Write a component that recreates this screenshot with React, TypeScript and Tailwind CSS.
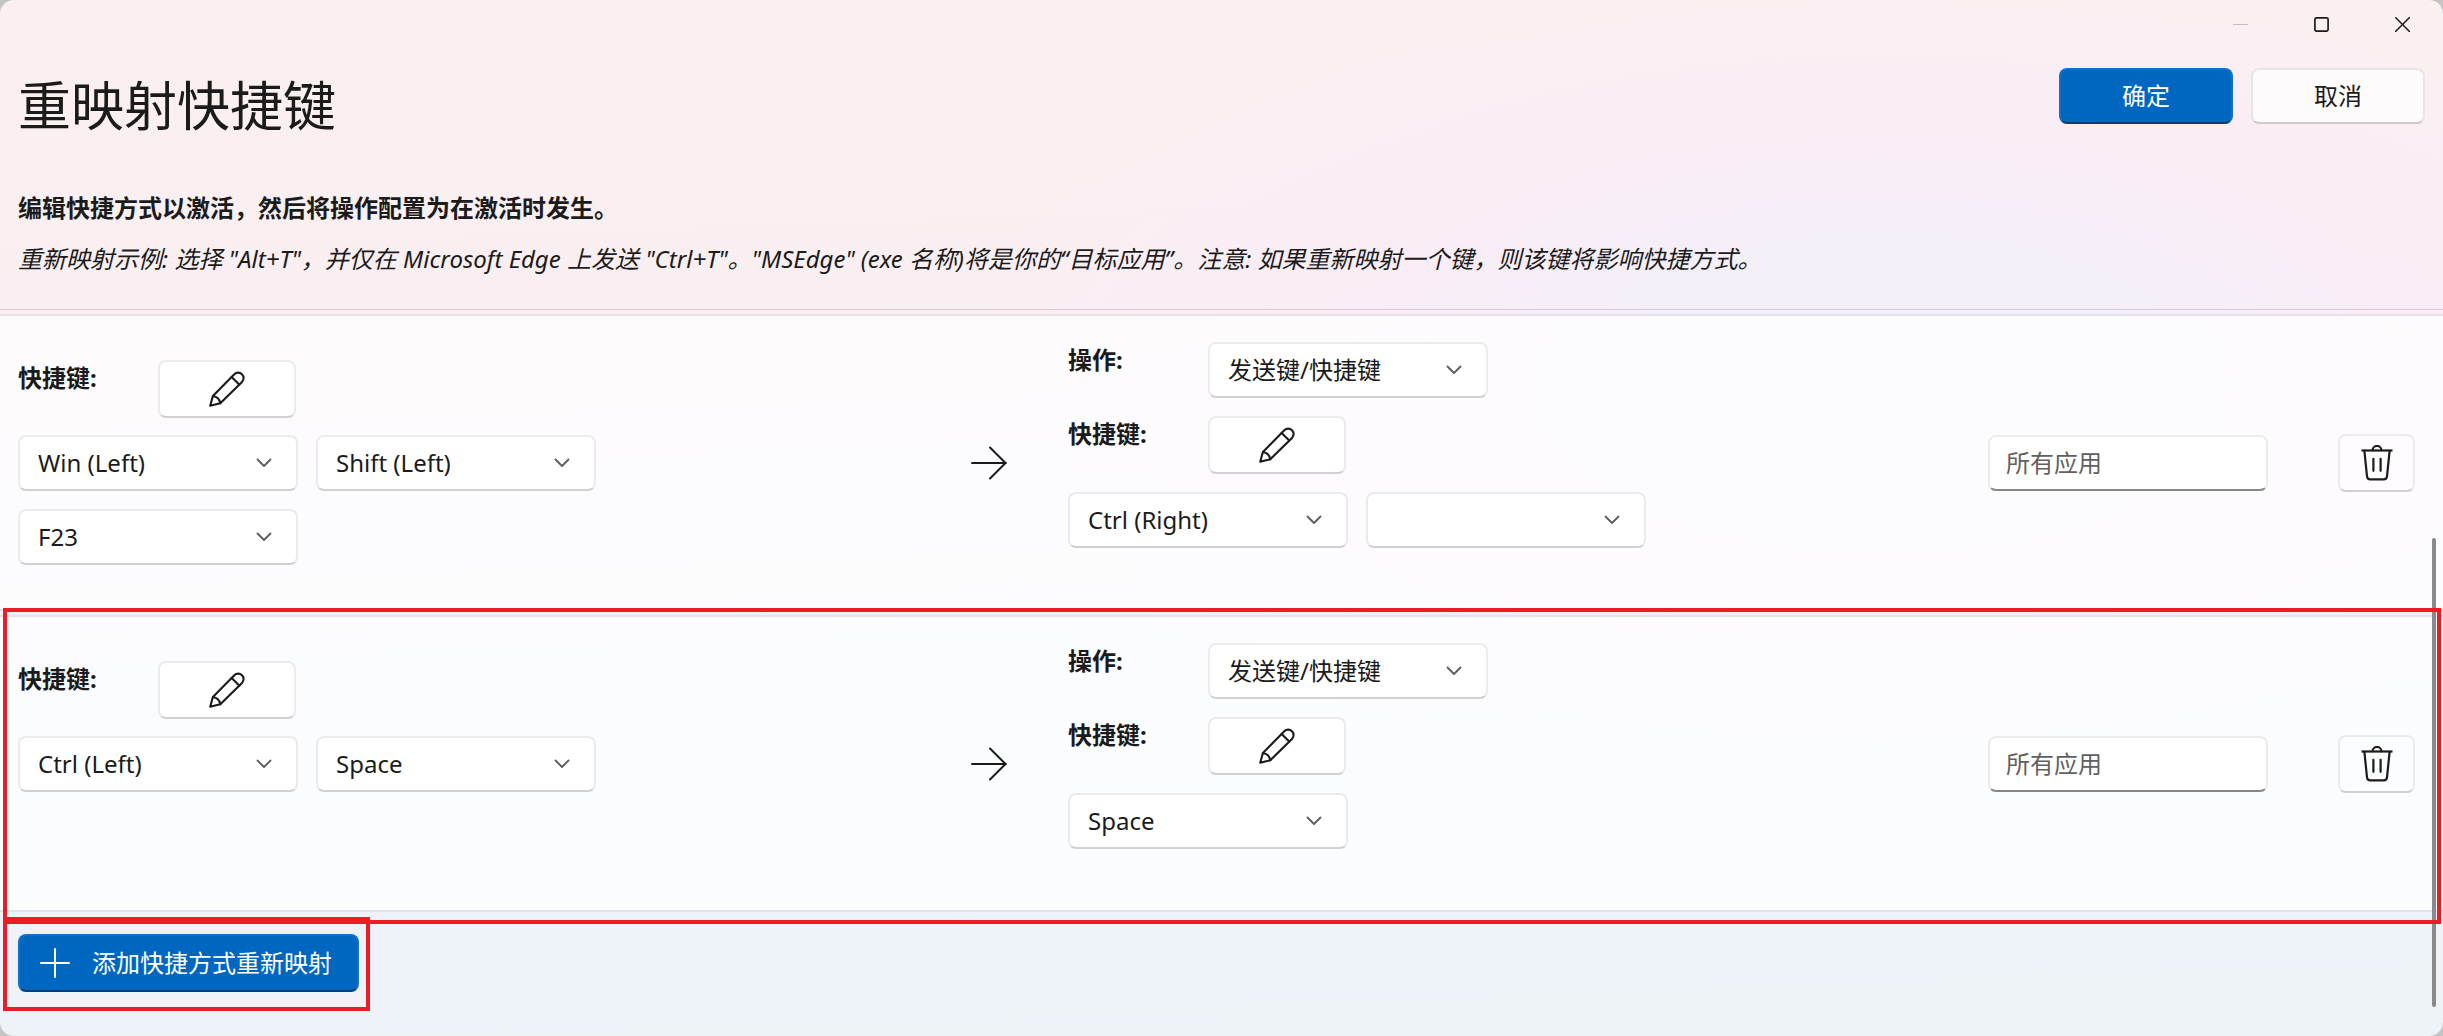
import type { ReactNode, SVGProps } from "react";

const stroke = {
  fill: "none",
  stroke: "currentColor",
  strokeLinecap: "round",
  strokeLinejoin: "round",
  "aria-hidden": true,
} as const;

function PencilIcon(props: SVGProps<SVGSVGElement>) {
  return (
    <svg viewBox="0 0 36 36" strokeWidth="2.1" {...stroke} {...props}>
      <path d="M1.2 34.800 3.900 25 25.300 3.200a5.400 5.400 0 0 1 7.700 7.700L11.300 32.200Z" />
      <path d="M22.600 6l7.600 7.600" />
      <path d="M3.900 25c4 .6 6.700 3.200 7.400 7.200" />
    </svg>
  );
}

function TrashIcon(props: SVGProps<SVGSVGElement>) {
  return (
    <svg viewBox="0 0 34 36" strokeWidth="2.2" {...stroke} {...props}>
      <path d="M1.500 5.500h31" strokeLinecap="butt" />
      <path d="M12.600 5.200a4.400 4.200 0 0 1 8.800 0" />
      <path d="M4.400 5.800 7 31.400c.2 1.800 1.400 3 3.200 3h13.600c1.800 0 3-1.200 3.200-3L29.600 5.800" />
      <path d="M13.400 13.800v12M20.600 13.800v12" />
    </svg>
  );
}

function ArrowIcon(props: SVGProps<SVGSVGElement>) {
  return (
    <svg viewBox="0 0 36 34" strokeWidth="2" {...stroke} {...props}>
      <path d="M1 17h34M19 1.500 34.500 17 19 32.500" />
    </svg>
  );
}

function ChevronIcon(props: SVGProps<SVGSVGElement>) {
  return (
    <svg viewBox="0 0 16 10" strokeWidth="1.8" {...stroke} {...props}>
      <path d="M1.500 1.500 8 8l6.500-6.500" />
    </svg>
  );
}

const face = "border-2 border-[#ebebed] border-b-[#d0d0d3] rounded-lg bg-white text-[#1b1b1b]";

function Dropdown({ label, value, options = [] }: { label: string; value: string; options?: string[] }) {
  return (
    <div className="relative h-14 w-[280px]">
      <select
        aria-label={label}
        defaultValue={value}
        className={`${face} h-14 w-full appearance-none pl-[18px] pr-12 text-[24px]`}
      >
        {[value, ...options].map((o) => (
          <option key={o} value={o}>
            {o}
          </option>
        ))}
      </select>
      <ChevronIcon className="pointer-events-none absolute right-[26px] top-[23px] h-[10px] w-4 text-[#5c5c5c]" />
    </div>
  );
}

function EditButton({ label }: { label: string }) {
  return (
    <button type="button" aria-label={label} className={`${face} flex h-[58px] w-[138px] items-center justify-center`}>
      <PencilIcon className="size-9" />
    </button>
  );
}

function Field({ label, children }: { label: string; children: ReactNode }) {
  return (
    <div className="flex items-start">
      <span className="w-[140px] text-[24px] leading-9 font-bold">{label}</span>
      {children}
    </div>
  );
}

function KeyList({ name, keys }: { name: string; keys: string[] }) {
  return (
    <div className="flex max-w-[600px] flex-wrap gap-[18px]">
      {keys.map((k, i) => (
        <Dropdown key={i} label={`${name} ${i + 1}`} value={k} />
      ))}
    </div>
  );
}

function MappingRow({ from, to, index }: { from: string[]; to: string[]; index: number }) {
  return (
    <section className="grid grid-cols-[953fr_97px_920fr_350px_105px] border-y-2 border-black/[0.06] bg-white/75 bg-clip-padding pl-[18px]">
      <div className="flex flex-col gap-[17px] pt-11">
        <Field label="快捷键:">
          <EditButton label={`编辑快捷键 ${index}`} />
        </Field>
        <KeyList name="按键" keys={from} />
      </div>
      <ArrowIcon className="h-[34px] w-9 self-center" />
      <div className="flex flex-col gap-[18px] pt-[26px] pb-[61px]">
        <Field label="操作:">
          <Dropdown label="操作" value="发送键/快捷键" />
        </Field>
        <Field label="快捷键:">
          <EditButton label={`编辑目标快捷键 ${index}`} />
        </Field>
        <KeyList name="目标按键" keys={to} />
      </div>
      <input
        type="text"
        aria-label="目标应用"
        placeholder="所有应用"
        className="h-14 w-[280px] self-center rounded-lg border-2 border-[#ebebed] border-b-[#868686] bg-white px-4 text-[24px] placeholder:text-[#606060]"
      />
      <button
        type="button"
        aria-label={`删除 ${index}`}
        className="flex h-[58px] w-[77px] items-center justify-center self-center rounded-lg border-2 border-[#ebebed] border-b-[#d0d0d3] bg-white/40"
      >
        <TrashIcon className="h-9 w-[34px]" />
      </button>
    </section>
  );
}

export default function App() {
  return (
    <div className="min-h-screen bg-[#c4c4c4] font-['Noto_Sans','Noto_Sans_CJK_SC',sans-serif] text-[#1b1b1b]">
      <main className="relative min-h-screen overflow-hidden rounded-[14px] bg-[radial-gradient(ellipse_22%_24%_at_77%_37%,#f1f0f8_0%,#f3eff8_50%,transparent_100%),radial-gradient(ellipse_38%_40%_at_77%_36%,#f9ecf8_0%,#f9ecf8_40%,transparent_100%),linear-gradient(178deg,#faf0ef_0%,#f9eff2_30%,#f3f0f8_48%,#eef2f9_70%,#eef3f8_100%)]">
        <div className="flex h-12 justify-end">
          <button type="button" aria-label="最小化" disabled className="flex w-[81px] items-center justify-center text-[#c4bfbf]">
            <svg viewBox="0 0 15 15" className="size-[15px]" {...stroke}>
              <path d="M0 7.500h15" />
            </svg>
          </button>
          <button type="button" aria-label="最大化" className="flex w-[81px] items-center justify-center">
            <svg viewBox="0 0 15 15" strokeWidth="1.700" className="size-[15px]" {...stroke}>
              <rect x="0.900" y="0.900" width="13.200" height="13.200" rx="1.500" />
            </svg>
          </button>
          <button type="button" aria-label="关闭" className="flex w-[81px] items-center justify-center">
            <svg viewBox="0 0 15 15" strokeWidth="1.500" className="size-[15px]" {...stroke}>
              <path d="M.5.5l14 14M14.500.5l-14 14" />
            </svg>
          </button>
        </div>

        <header className="border-b border-[#d6cdd3] px-[18px] pb-[25px]">
          <div className="flex items-start justify-between pt-5">
            <h1 className="text-[53px] leading-[76px]">重映射快捷键</h1>
            <div className="flex gap-[18px]">
              <button
                type="button"
                className="h-14 w-[174px] rounded-lg border-2 border-[#1470c6] border-b-[#003e73] bg-[#0067c0] text-[24px] text-white"
              >
                确定
              </button>
              <button
                type="button"
                className="h-14 w-[174px] rounded-lg border-2 border-[#ebe2e4] border-b-[#d2c9cb] bg-[#fefbfc] text-[24px]"
              >
                取消
              </button>
            </div>
          </div>
          <p className="mt-[38px] text-[24px] leading-[52px] font-bold">
            编辑快捷方式以激活，然后将操作配置为在激活时发生。
          </p>
          <p className="text-[24px] leading-[50px] italic">
            重新映射示例: 选择 "Alt+T"，并仅在 Microsoft Edge 上发送 "Ctrl+T"。"MSEdge" (exe
            名称)将是你的“目标应用”。注意: 如果重新映射一个键，则该键将影响快捷方式。
          </p>
        </header>

        <div className="flex flex-col gap-1 pt-1">
          <MappingRow index={1} from={["Win (Left)", "Shift (Left)", "F23"]} to={["Ctrl (Right)", ""]} />
          <div className="relative">
            <MappingRow index={2} from={["Ctrl (Left)", "Space"]} to={["Space"]} />
            <div className="pointer-events-none absolute -top-[7px] right-[2px] -bottom-3 left-[3px] z-10 border-4 border-[#ed1c24]" />
          </div>
        </div>

        <footer className="flex px-[18px] pt-[22px] pb-11">
          <div className="relative">
            <button
              type="button"
              className="flex h-[58px] w-[341px] items-center rounded-lg border-2 border-[#1470c6] border-b-[#003e73] bg-[#0067c0] pl-5 text-[24px] text-white"
            >
              <svg viewBox="0 0 30 30" strokeWidth="2" className="mr-[22px] size-[30px]" {...stroke}>
                <path d="M15 1v28M1 15h28" />
              </svg>
              添加快捷方式重新映射
            </button>
            <div className="pointer-events-none absolute -top-[17px] -right-[11px] -bottom-[19px] -left-[15px] z-10 border-4 border-[#ed1c24]" />
          </div>
        </footer>

        <div className="absolute right-[7px] bottom-[29px] h-[469px] w-1 rounded-full bg-[#8a8a8c]" />
      </main>
    </div>
  );
}
